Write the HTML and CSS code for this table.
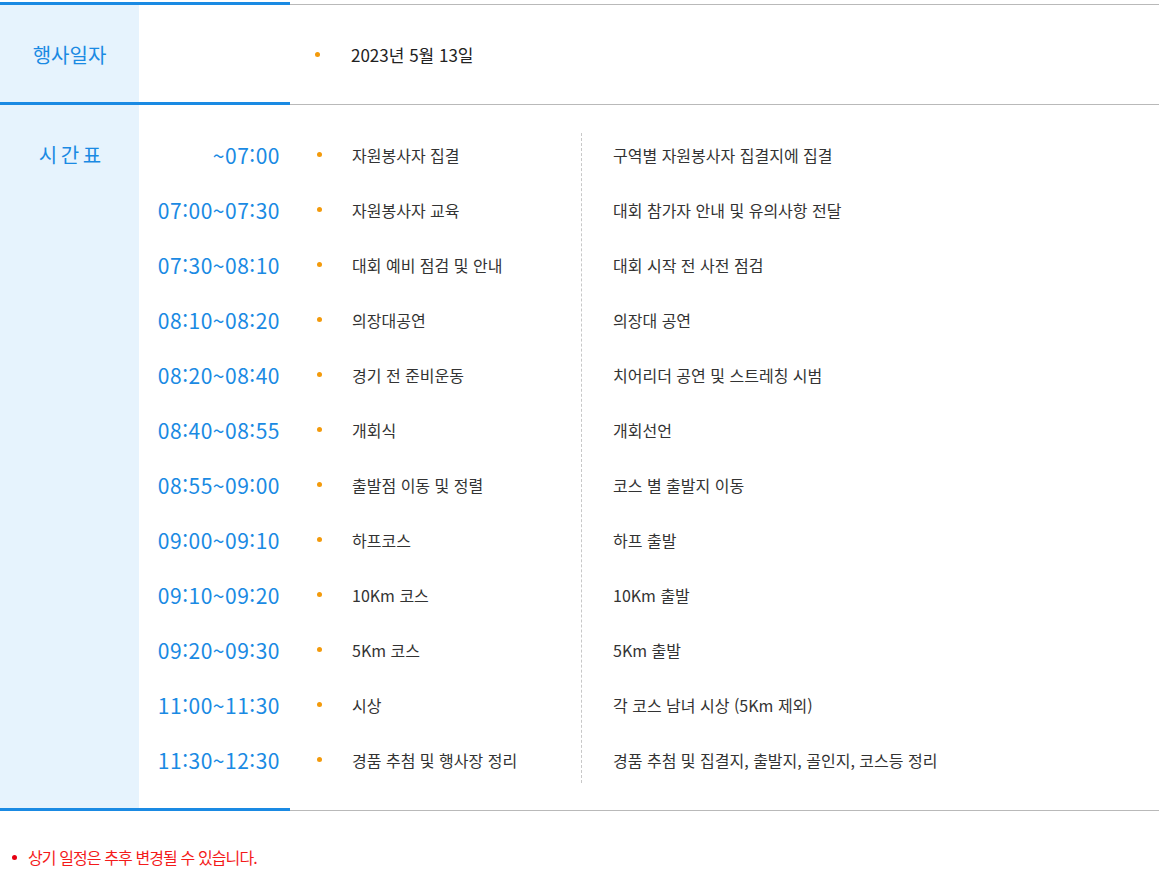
FILE: index.html
```html
<!DOCTYPE html>
<html lang="ko">
<head>
<meta charset="utf-8">
<title>행사 일정</title>
<link rel="stylesheet" href="styles.css">
</head>
<body>
<div class="info">
  <div class="rule"></div>
  <div class="row">
    <div class="label">행사일자</div>
    <div class="content date-content">
      <span class="dot"></span>
      <span class="date">2023년 5월 13일</span>
    </div>
  </div>
  <div class="rule"></div>
  <div class="row">
    <div class="label label-top">시 간 표</div>
    <div class="content">
      <div class="schedule">
        <div class="times">
          <div class="time">~07:00</div>
          <div class="time">07:00~07:30</div>
          <div class="time">07:30~08:10</div>
          <div class="time">08:10~08:20</div>
          <div class="time">08:20~08:40</div>
          <div class="time">08:40~08:55</div>
          <div class="time">08:55~09:00</div>
          <div class="time">09:00~09:10</div>
          <div class="time">09:10~09:20</div>
          <div class="time">09:20~09:30</div>
          <div class="time">11:00~11:30</div>
          <div class="time">11:30~12:30</div>
        </div>
        <div class="items">
          <div class="item"><span class="dot"></span>자원봉사자 집결</div>
          <div class="item"><span class="dot"></span>자원봉사자 교육</div>
          <div class="item"><span class="dot"></span>대회 예비 점검 및 안내</div>
          <div class="item"><span class="dot"></span>의장대공연</div>
          <div class="item"><span class="dot"></span>경기 전 준비운동</div>
          <div class="item"><span class="dot"></span>개회식</div>
          <div class="item"><span class="dot"></span>출발점 이동 및 정렬</div>
          <div class="item"><span class="dot"></span>하프코스</div>
          <div class="item"><span class="dot"></span>10Km 코스</div>
          <div class="item"><span class="dot"></span>5Km 코스</div>
          <div class="item"><span class="dot"></span>시상</div>
          <div class="item"><span class="dot"></span>경품 추첨 및 행사장 정리</div>
        </div>
        <div class="descs">
          <div class="desc">구역별 자원봉사자 집결지에 집결</div>
          <div class="desc">대회 참가자 안내 및 유의사항 전달</div>
          <div class="desc">대회 시작 전 사전 점검</div>
          <div class="desc">의장대 공연</div>
          <div class="desc">치어리더 공연 및 스트레칭 시범</div>
          <div class="desc">개회선언</div>
          <div class="desc">코스 별 출발지 이동</div>
          <div class="desc">하프 출발</div>
          <div class="desc">10Km 출발</div>
          <div class="desc">5Km 출발</div>
          <div class="desc">각 코스 남녀 시상 (5Km 제외)</div>
          <div class="desc">경품 추첨 및 집결지, 출발지, 골인지, 코스등 정리</div>
        </div>
      </div>
    </div>
  </div>
  <div class="rule"></div>
</div>
<p class="note"><span class="note-dot"></span>상기 일정은 추후 변경될 수 있습니다.</p>
</body>
</html>
```

FILE: styles.css
```css
* { box-sizing: border-box; }
html, body { margin: 0; padding: 0; background: #fff; }
body {
  font-family: "Noto Sans CJK KR", "Noto Sans", sans-serif;
  color: #333;
  padding-top: 2px;
  width: 1159px;
}
.rule {
  height: 3px;
  background:
    linear-gradient(#1a8ae3, #1a8ae3) 0 0 / 290px 3px no-repeat,
    linear-gradient(#b9b9b9, #b9b9b9) 0 2px / 100% 1px no-repeat;
}
.row {
  display: flex;
}
.label {
  width: 139px;
  flex: none;
  background: #e6f3fd;
  color: #1a8ae3;
  font-size: 20px;
  display: flex;
  align-items: center;
  justify-content: center;
  letter-spacing: 0;
  padding-top: 2px;
}
.label-top {
  align-items: flex-start;
  padding-top: 35px;
  letter-spacing: -1px;
}
.content { flex: 1; }
.date-content {
  height: 97px;
  display: flex;
  align-items: center;
  padding-left: 176px;
  padding-top: 2px;
  font-size: 17px;
  letter-spacing: 0;
  color: #222;
}
.date-content .dot { margin-right: 31px; }
.dot {
  display: inline-block;
  width: 5px;
  height: 5px;
  border-radius: 50%;
  background: #f39a0b;
  margin-right: 30px;
}
.schedule {
  display: flex;
  padding: 22px 0 0;
  height: 703px;
}
.times { width: 141px; }
.time {
  height: 55px;
  display: flex;
  align-items: center;
  justify-content: flex-end;
  color: #1a8ae3;
  font-size: 21px;
  letter-spacing: 0.5px;
}
.items {
  width: 301px;
  padding-left: 37px;
}
.item, .desc {
  height: 55px;
  display: flex;
  align-items: center;
  font-size: 16px;
  letter-spacing: 0;
  color: #333;
}
.descs {
  border-left: 1px dashed #c8c8c8;
  padding-left: 31px;
  margin-top: 6px;
  margin-bottom: 25px;
}
.descs .desc:first-child { margin-top: -6px; }
.note {
  margin: 34px 0 0 12px;
  color: #f41a1a;
  font-size: 16px;
  letter-spacing: -0.9px;
  display: flex;
  align-items: center;
}
.note-dot {
  width: 5px;
  height: 5px;
  border-radius: 50%;
  background: #e60012;
  margin-right: 11px;
}
```
